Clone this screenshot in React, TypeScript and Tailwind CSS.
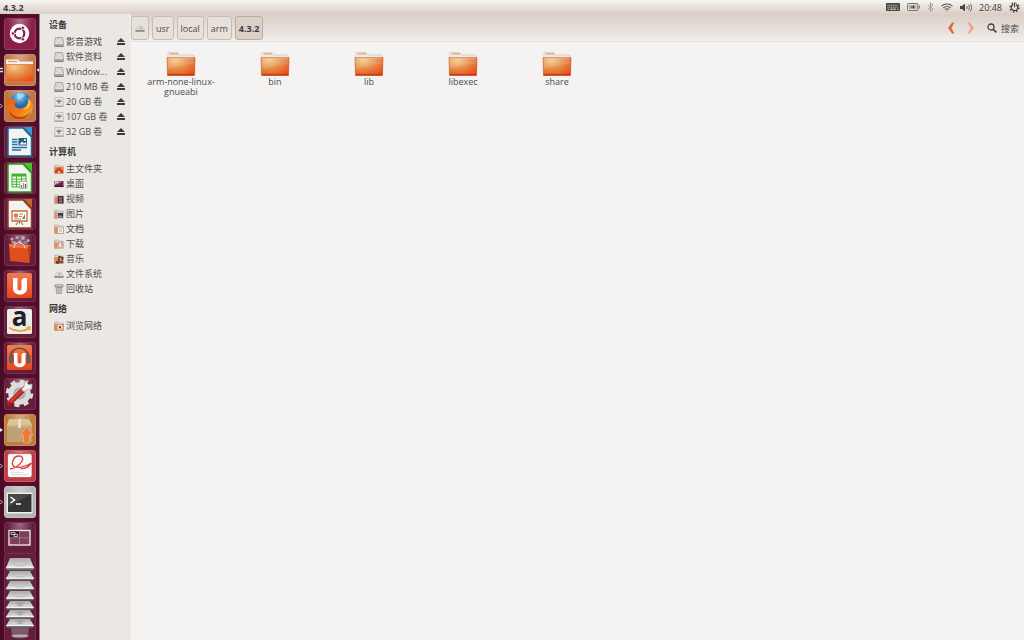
import { useState, type ReactNode } from 'react'
import clsx from 'clsx'

const devices = [
  { name: '影音游戏', kind: 'disk' },
  { name: '软件资料', kind: 'disk' },
  { name: 'Windows 7', label: 'Window...', kind: 'disk' },
  { name: '210 MB 卷', kind: 'disk' },
  { name: '20 GB 卷', kind: 'usb' },
  { name: '107 GB 卷', kind: 'usb' },
  { name: '32 GB 卷', kind: 'usb' },
]

const places = [
  { name: '主文件夹', kind: 'home' },
  { name: '桌面', kind: 'desktop' },
  { name: '视频', kind: 'video' },
  { name: '图片', kind: 'picture' },
  { name: '文档', kind: 'document' },
  { name: '下载', kind: 'download' },
  { name: '音乐', kind: 'music' },
  { name: '文件系统', kind: 'filesystem' },
  { name: '回收站', kind: 'trash' },
]

const folders = ['arm-none-linux-gnueabi', 'bin', 'lib', 'libexec', 'share']

const crumbs = ['usr', 'local', 'arm', '4.3.2']

export default function App() {
  const [current, setCurrent] = useState('4.3.2')

  return (
    <div className="flex h-screen flex-col overflow-hidden bg-[#f4f3f1] font-['Open_Sans','Noto_Sans_CJK_SC',sans-serif] text-[9px] leading-[11px] text-[#4c4c4c]">
      <Gradients />
      <MenuBar title={current} />
      <div className="flex min-h-0 flex-1">
        <Launcher />
        <Sidebar />
        <main className="flex min-w-0 flex-1 flex-col">
          <div className="flex items-center border-b border-[#e6ddd5] bg-linear-to-b from-[#d9cfc6] to-[#f1ede9] pt-0.5 pr-1 pb-px">
            <nav aria-label="路径" className="flex gap-[3px]">
              <button
                type="button"
                aria-label="/"
                className="flex h-6 w-[18px] items-center justify-center rounded-[3px] border border-[#c9bdb2] bg-[#e8e0da]"
              >
                <PlaceIcon kind="filesystem" />
              </button>
              {crumbs.map((crumb) => (
                <button
                  key={crumb}
                  type="button"
                  onClick={() => setCurrent(crumb)}
                  className={clsx(
                    'h-6 rounded-[3px] border px-[3px]',
                    crumb === current
                      ? 'border-[#b9ada1] bg-[#d9d0c8] font-bold text-[#3c3c3c]'
                      : 'border-[#c9bdb2] bg-[#e8e0da]'
                  )}
                >
                  {crumb}
                </button>
              ))}
            </nav>
            <div className="ml-auto flex items-center gap-3">
              <button type="button" aria-label="后退">
                <svg width="8" height="12" viewBox="0 0 8 12">
                  <path d="M5 .5 1 6l4 5.500h2.500L4.500 6l3-5.500Z" fill="#e0693a" />
                </svg>
              </button>
              <button type="button" aria-label="前进">
                <svg width="8" height="12" viewBox="0 0 8 12">
                  <path d="M3 .5 7 6l-4 5.500H.5L3.500 6l-3-5.500Z" fill="#eba88b" />
                </svg>
              </button>
              <button type="button" className="flex items-center gap-1 pr-px">
                <svg width="10" height="10" viewBox="0 0 10 10" fill="none" stroke="#444">
                  <circle cx="4" cy="4" r="3" strokeWidth="1.300" />
                  <path d="m6.300 6.300 3 3" strokeWidth="1.800" />
                </svg>
                搜索
              </button>
            </div>
          </div>
          <div className="flex flex-wrap content-start pt-[9px] pl-[3px]">
            {folders.map((name) => (
              <button key={name} type="button" className="flex w-[94px] flex-col items-center px-2 leading-[10px]">
                <FolderIcon />
                <span className="max-w-full">{name}</span>
              </button>
            ))}
          </div>
        </main>
      </div>
    </div>
  )
}

function MenuBar({ title }: { title: string }) {
  return (
    <header className="flex h-[14px] shrink-0 items-center justify-between bg-linear-to-b from-[#f8f5f1] to-[#d9cfc6] pr-1 pl-[3px]">
      <h1 className="font-bold text-[#3c3c3c]">{title}</h1>
      <div className="flex items-center gap-[7px] text-[#444]">
        <svg width="14" height="8" viewBox="0 0 14 8">
          <rect width="14" height="8" rx="1" fill="#444" />
          <path d="M1.500 2.200h11M1.500 4.200h11" stroke="#e6e0da" strokeWidth="1" strokeDasharray="1 .8" />
          <path d="M1.500 6.200h1.500M4 6.200h6M11 6.200h1.500" stroke="#e6e0da" strokeWidth="1" />
        </svg>
        <svg width="13" height="8" viewBox="0 0 13 8">
          <rect x=".5" y=".5" width="10.500" height="7" rx="1" fill="#dcd8d4" stroke="#777" />
          <rect x="2" y="2" width="7.500" height="4" fill="#b9b4ae" />
          <path d="M12.300 2.500v3" stroke="#777" />
          <path d="M3.500 4h4M6.500 2.500v3" stroke="#333" strokeWidth=".9" fill="none" />
        </svg>
        <svg width="7" height="10" viewBox="0 0 7 10" fill="none" stroke="#a39e99" strokeWidth="1">
          <path d="m1 3 5 4-2.500 2.300V.7L6 3 1 7" />
        </svg>
        <svg width="12" height="9" viewBox="0 0 12 9" fill="none" stroke="#555" strokeWidth="1.100">
          <path d="M.5 3.200c3-3 8-3 11 0" />
          <path d="M2.300 5c2-2 5.400-2 7.400 0" />
          <path d="M4 6.600c1-1 3-1 4 0" />
          <circle cx="6" cy="8" r=".6" fill="#555" stroke="none" />
        </svg>
        <svg width="12" height="9" viewBox="0 0 12 9" fill="none" stroke="#444">
          <path d="M0 3h2l3-2.500v8L2 6H0Z" fill="#444" stroke="none" />
          <path d="M6.500 3c.8 1 .8 2 0 3M8.300 1.800c1.500 1.700 1.500 3.700 0 5.400M10 .6c2.200 2.500 2.200 5.300 0 7.800" strokeWidth=".9" />
        </svg>
        <time className="text-[#3c3c3c]">20:48</time>
        <svg width="11" height="11" viewBox="0 0 11 11" fill="none" stroke="#444">
          <circle cx="5.500" cy="5.500" r="4.400" strokeWidth="1.500" strokeDasharray="1.500 1.955" />
          <circle cx="5.500" cy="5.500" r="3.200" strokeWidth="1.300" />
          <path d="M5.500 1v4.500" stroke="#ece7e2" strokeWidth="2.600" />
          <path d="M5.500.5v4.800" strokeWidth="1.200" />
        </svg>
      </div>
    </header>
  )
}

function Sidebar() {
  return (
    <aside className="flex w-[91px] shrink-0 flex-col gap-0.5 border-r border-[#efedea] bg-[#ebe8e3]">
      <Section title="设备">
        {devices.map((d) => (
          <li key={d.name} className="flex h-[15px] items-center justify-between pr-[5px]">
            <PlaceLink kind={d.kind}>{d.label ?? d.name}</PlaceLink>
            <button type="button" aria-label={`弹出 ${d.name}`}>
              <svg width="8" height="7" viewBox="0 0 8 7" fill="#3c3c3c">
                <path d="m4 0 4 4H0ZM0 5h8v2H0Z" />
              </svg>
            </button>
          </li>
        ))}
      </Section>
      <Section title="计算机">
        {places.map((p) => (
          <li key={p.name} className="flex h-[15px] items-center">
            <PlaceLink kind={p.kind}>{p.name}</PlaceLink>
          </li>
        ))}
      </Section>
      <Section title="网络">
        <li className="flex h-[15px] items-center">
          <PlaceLink kind="network">浏览网络</PlaceLink>
        </li>
      </Section>
    </aside>
  )
}

function Section({ title, children }: { title: string; children: ReactNode }) {
  return (
    <section>
      <h2 className="flex h-5 items-center pl-[9px] font-bold text-[#3c3c3c]">{title}</h2>
      <ul className="pl-[14px]">{children}</ul>
    </section>
  )
}

function PlaceLink({ kind, children }: { kind: string; children: ReactNode }) {
  return (
    <a href="#" className="flex items-center gap-0.5 whitespace-nowrap">
      <PlaceIcon kind={kind} />
      {children}
    </a>
  )
}

function PlaceIcon({ kind }: { kind: string }) {
  return <svg width="10" height="10" viewBox="0 0 10 10" className="shrink-0">{placeShapes[kind]}</svg>
}

const miniFolder = (
  <>
    <path d="M.5 1h4l1 1h4v7.500h-9Z" fill="#d9d2ca" stroke="#a9a098" strokeWidth=".5" />
    <path d="M.5 3h3v6.500h-3Z" fill="#e58a5a" />
  </>
)

const placeShapes: Record<string, ReactNode> = {
  disk: (
    <>
      <path d="M1.500.5h7l1 6v3h-9v-3Z" fill="#e2e2e0" stroke="#8b8b88" strokeWidth=".7" />
      <ellipse cx="5" cy="3.500" rx="2.500" ry="1.800" fill="none" stroke="#bcbcb9" strokeWidth=".7" />
      <path d="M.5 7h9v2.500h-9Z" fill="#a5a5a2" />
      <path d="M1 9.500h8" stroke="#6f6f6c" strokeWidth=".7" />
    </>
  ),
  usb: (
    <>
      <path d="M1 .5h8l.5 9h-9Z" fill="#e6e6e4" stroke="#a9a9a6" strokeWidth=".6" />
      <path d="M5 2v5M3 3v1.500h4V3" fill="none" stroke="#666" strokeWidth=".9" />
      <path d="M1 9h8" stroke="#8b8b88" strokeWidth=".9" />
    </>
  ),
  home: (
    <>
      {miniFolder}
      <path d="M.5 3h9v6.500h-9Z" fill="#e9895b" />
      <path d="m5 3 4 3.500V9H1V6.500Z" fill="#d8431c" />
      <path d="M4 7h2v2H4Z" fill="#f3c1a6" />
    </>
  ),
  desktop: (
    <>
      <path d="M.5 2h9v6h-9Z" fill="#6b2148" />
      <path d="M1 2.500h8L1 6Z" fill="#c98aa6" />
      <path d="M1 2.500h4L1 4.500Z" fill="#f1dce5" />
      <path d="M.5 7.500h9" stroke="#2f1524" />
    </>
  ),
  video: (
    <>
      {miniFolder}
      <path d="M3.500 2h6v7.500h-6Z" fill="#4a3340" />
      <path d="M5 3.500h3v2H5ZM5 6.500h3v2H5Z" fill="#9b6d86" />
    </>
  ),
  picture: (
    <>
      {miniFolder}
      <path d="M3.500 3.500h6v5.500h-6Z" fill="#3b3f4c" stroke="#f1f1f1" strokeWidth=".6" />
      <path d="m4 8 2-2 3 2Z" fill="#8d94a8" />
    </>
  ),
  document: (
    <>
      {miniFolder}
      <path d="M3.500 3h4l2 2v4.500h-6Z" fill="#f2efec" stroke="#a9857a" strokeWidth=".6" />
      <path d="M5 5.500h3M5 7.200h3" stroke="#c58a70" strokeWidth=".6" />
    </>
  ),
  download: (
    <>
      {miniFolder}
      <path d="M3 3h6.500v6H3Z" fill="#e7ae8e" />
      <path d="M5 3h2.500v3H9L6.200 9 3.500 6H5Z" fill="#f1eeec" stroke="#8a7a74" strokeWidth=".5" />
    </>
  ),
  music: (
    <>
      {miniFolder}
      <path d="M.5 3h9v6.500h-9Z" fill="#e58a5a" />
      <path d="M5 8V2.500l3.500 1V6M5 8a1.200 1 0 1 1-1-.8" fill="none" stroke="#2f2f2f" strokeWidth="1.200" />
      <circle cx="7.500" cy="8" r="1.300" fill="#444" />
    </>
  ),
  filesystem: (
    <>
      <path d="M3 3h4.500L9.500 7H.5Z" fill="#dededc" stroke="#b5b5b2" strokeWidth=".4" />
      <path d="M4 5h3M5.500 4v2" stroke="#999" strokeWidth=".6" />
      <path d="M.5 7h9v1.800h-9Z" fill="#8b8b89" />
    </>
  ),
  trash: (
    <>
      <path d="M1.500 2.500h7L7.800 10H2.200Z" fill="#a6a6a3" />
      <path d="M3.500 4v5M5 4v5M6.500 4v5" stroke="#d9d9d6" strokeWidth=".6" />
      <path d="M1 .8h8v2H1Z" fill="#dcdcda" stroke="#777" strokeWidth=".7" />
    </>
  ),
  network: (
    <>
      {miniFolder}
      <path d="M.5 3h9v6.500h-9Z" fill="#e08457" />
      <circle cx="5.800" cy="6.200" r="2.600" fill="#f1e5dd" />
      <path d="M4.800 5.200h2.200v2.200H4.800Z" fill="#54433c" />
    </>
  ),
}

function FolderIcon() {
  return (
    <svg width="30" height="26" viewBox="0 0 30 26">
      <path d="M2 1.500h10l1.500 2.500h14.500v18H2Z" fill="#eeecea" stroke="#c8c4c0" strokeWidth=".7" />
      <path d="M4 3h8" stroke="#ee9a68" strokeWidth="1.200" />
      <path d="M1 6.500h28L28.500 24.500h-27Z" fill="url(#folder)" stroke="#bd5127" strokeWidth=".6" />
      <path d="M1.500 7h27" stroke="#f0c09a" strokeWidth=".7" />
      <path d="M1.700 23.800h26.600" stroke="#b5340e" strokeWidth="1" />
      <path d="M1.500 7h27v6C17 13 8 16 1.600 19Z" fill="#fff" opacity=".1" />
    </svg>
  )
}

function Gradients() {
  return (
    <svg width="0" height="0" className="absolute" aria-hidden="true">
      <defs>
        <radialGradient id="folder" cx=".3" cy=".15" r="1">
          <stop offset="0" stopColor="#f4cb8c" />
          <stop offset=".45" stopColor="#e68f4b" />
          <stop offset="1" stopColor="#e9450f" />
        </radialGradient>
        <linearGradient id="plate" x1="0" y1="0" x2="0" y2="1">
          <stop offset="0" stopColor="#a9a9a7" />
          <stop offset="1" stopColor="#e3e3e1" />
        </linearGradient>
        <linearGradient id="orange" x1="0" y1="0" x2="0" y2="1">
          <stop offset="0" stopColor="#f47b4c" />
          <stop offset="1" stopColor="#e4471c" />
        </linearGradient>
        <radialGradient id="globe" cx=".45" cy=".2" r=".8">
          <stop offset="0" stopColor="#8fd4f3" />
          <stop offset=".5" stopColor="#2a78bd" />
          <stop offset="1" stopColor="#15336f" />
        </radialGradient>
        <linearGradient id="fox" x1="0" y1="0" x2="1" y2="1">
          <stop offset="0" stopColor="#e25c18" />
          <stop offset=".6" stopColor="#ee7c1b" />
          <stop offset="1" stopColor="#f9c43a" />
        </linearGradient>
      </defs>
    </svg>
  )
}

type LauncherApp = {
  name: string
  tile: string
  art: ReactNode
  running?: 'windows' | 'filled' | 'hollow'
  focused?: boolean
}

const dark = 'bg-[#651d3e] border-[#74324e]'

const office = (color: string, dim: string, body: ReactNode) => (
  <>
    <path d="M19 1h9v9Z" fill={dim} />
    <path d="M5.500 2h14l8 8.500v19.500h-22a1.500 1.500 0 0 1-1.500-1.500v-25A1.500 1.500 0 0 1 5.500 2Z" fill="#f3f3f2" stroke={color} strokeWidth="1.500" />
    <path d="m19.500 2 8 8.500" stroke={color} strokeWidth="2" />
    {body}
  </>
)

const launcherApps: LauncherApp[] = [
  {
    name: 'Dash',
    tile: 'bg-[#88204a] border-[#943a5e]',
    art: (
      <>
        <circle cx="15.500" cy="15.500" r="9.700" fill="#fff" />
        <circle cx="15.500" cy="15.500" r="4.800" fill="none" stroke="#88204a" strokeWidth="2.300" />
        <path d="M15.500 15.500H8M15.500 15.500l4.500-7.600M15.500 15.500l4.500 7.600" stroke="#fff" strokeWidth="1" />
        <circle cx="15.500" cy="15.500" r="3.300" fill="#fff" />
        <g fill="#88204a" stroke="#fff" strokeWidth=".7">
          <circle cx="8.900" cy="15.500" r="1.700" />
          <circle cx="18.800" cy="9.800" r="1.700" />
          <circle cx="18.800" cy="21.200" r="1.700" />
        </g>
      </>
    ),
  },
  {
    name: '文件',
    tile: 'bg-[#bf7a4c] border-[#cc8e66]',
    running: 'windows',
    focused: true,
    art: (
      <>
        <path d="M2 5.500h12l1.500 2h13.500v20H2Z" fill="#f4f1ee" />
        <path d="M4 7.500h9" stroke="#ef9a62" strokeWidth="1.200" />
        <path d="M2 10.500h27.500L29 27.500H2.500Z" fill="url(#folder)" stroke="#d8632d" strokeWidth=".6" />
      </>
    ),
  },
  {
    name: 'Firefox',
    tile: 'bg-[#b97748] border-[#c78a62]',
    running: 'hollow',
    art: (
      <>
        <circle cx="16.500" cy="12.500" r="10.500" fill="url(#globe)" />
        <path d="M13 4c2-2 6-1 8 1-1 2-3 2-4 4s-3 0-4-1Z" fill="#b9e4f5" opacity=".6" />
        <path d="M4 5c0 2 0 3 .6 4 2-.6 4-.4 5.400.6l3.500 1.400c-1 1-3 1.200-3 3 0 4 5 5.500 9 3.500 3.500-1.500 5.500-5 4.500-10 2 1 3 3 3 4 .6-1 .4-2 .3-3 3 7 1.500 14-3 18-5 4.500-13 4.500-18 0C.5 21 .8 12 4 5Z" fill="url(#fox)" />
        <path d="M5 20c3 7 15 10 21 2-2 8-14 11-20 2.500Z" fill="#cf3f12" />
        <path d="M24 8c1.500 5-.5 10-5 12 5-.5 9-5 7-9Z" fill="#fbd548" />
      </>
    ),
  },
  {
    name: 'LibreOffice Writer',
    tile: dark,
    art: office('#1c6a96', '#3a9ccd', (
      <>
        <path d="M8 13.500h5.500M8 16h5.500M8 18.500h5.500M8 21.500h15M8 24h9" stroke="#2475a2" strokeWidth="1.300" />
        <path d="M14.500 12h8.500v7.500h-8.500Z" fill="#245e86" />
        <path d="m15.500 18.500 2.500-3 2 2 1.500-1.500 1 2.500Z" fill="#fff" />
        <circle cx="21" cy="14" r="1" fill="#fff" />
      </>
    )),
  },
  {
    name: 'LibreOffice Calc',
    tile: dark,
    art: office('#2ca017', '#52ba3c', (
      <>
        <path d="M8 12h14v13H8Z" fill="#e7f7e2" stroke="#46b02f" />
        <path d="M8 12h14v2.500H8Z" fill="#46b02f" />
        <path d="M8 17.200h14M8 19.800h14M8 22.400h14M12.500 12v13M17.500 12v13" stroke="#46b02f" strokeWidth=".9" />
        <path d="M16 19.500h7v7h-7Z" fill="#fff" stroke="#888" strokeWidth=".5" />
        <path d="M17.500 26v-3" stroke="#3b8fd0" strokeWidth="1.300" />
        <path d="M19.500 26v-5" stroke="#e8792c" strokeWidth="1.300" />
        <path d="M21.500 26v-4" stroke="#2c70ad" strokeWidth="1.300" />
      </>
    )),
  },
  {
    name: 'LibreOffice Impress',
    tile: dark,
    art: office('#8e401e', '#c26436', (
      <>
        <path d="M8 13h15v10H8Z" fill="#fff" stroke="#cd6a39" strokeWidth="1.300" />
        <circle cx="12" cy="17.500" r="2.300" fill="#c98056" />
        <path d="M15 16h4M15 18.500h3M10 21h7" stroke="#c98056" />
        <path d="m18 21 3-5v5Z" fill="#41a046" />
        <path d="M15.500 23v2.500M12 27l2-3M19 27l-2-3" stroke="#9b5a3c" />
      </>
    )),
  },
  {
    name: 'Ubuntu 软件中心',
    tile: dark,
    art: (
      <>
        <path d="M7 7h17v7H7Z" fill="#8d5367" />
        <g fill="#b9aab2">
          <circle cx="8" cy="5" r="1.600" />
          <circle cx="13" cy="3.500" r="1.600" />
          <circle cx="19" cy="4" r="2" />
          <circle cx="24" cy="6.500" r="1.600" />
          <circle cx="16" cy="8" r="1.800" />
          <circle cx="11" cy="9" r="1.600" />
        </g>
        <circle cx="9" cy="8" r="1.300" fill="#e78963" />
        <circle cx="21" cy="8.500" r="1.500" fill="#7e95aa" />
        <path d="m5 10 22 1-1.500 18L6 27Z" fill="#dd4f1c" />
        <path d="m5 10 22 1-.4 4L5.300 13Z" fill="#ed7443" />
        <path d="M10 14c0-7 10-7 11 0" fill="none" stroke="#f1e1d8" strokeWidth="1" />
        <path d="m25.500 29 1.500-18-3 2Z" fill="#b93b10" />
      </>
    ),
  },
  {
    name: 'Ubuntu One',
    tile: dark,
    art: (
      <>
        <rect x="3" y="3" width="25" height="25" rx="1.500" fill="url(#orange)" />
        <path d="M9 8h4.500v10.500c0 2.500 4 2.500 4 0V10l2-2H23v10.500c0 8-14 8-14 0Z" fill="#fff" />
      </>
    ),
  },
  {
    name: 'Amazon',
    tile: dark,
    art: (
      <>
        <rect x="3" y="3" width="25" height="25" rx="1.500" fill="#ececeb" />
        <text x="15.500" y="20" textAnchor="middle" fontSize="26" fontWeight="700" fontFamily="Open Sans" fill="#222">
          a
        </text>
        <path d="M5 21.500c6 4.500 14 4.500 20 1" fill="none" stroke="#ee9a1d" strokeWidth="1.500" />
        <path d="M22.500 21.500c2-.8 3.500-.6 3.800-.2.300.6-.2 2.200-1.300 3.400" fill="none" stroke="#ee9a1d" strokeWidth="1.200" />
      </>
    ),
  },
  {
    name: 'Ubuntu One Music',
    tile: dark,
    art: (
      <>
        <rect x="3" y="3" width="25" height="25" rx="1.500" fill="url(#orange)" />
        <path d="M6.500 16C6 3 25 3 24.500 16" fill="none" stroke="#6b4a42" strokeWidth="1.700" />
        <path d="M10 11h3.500v9c0 2 4 2 4 0v-7.500l1.500-1.500h2.500v9c0 7-11.500 7-11.500 0Z" fill="#fff" />
        <rect x="5" y="12.500" width="4.500" height="9" rx="2" fill="#6d5a55" />
        <rect x="22" y="12.500" width="4.500" height="9" rx="2" fill="#6d5a55" />
      </>
    ),
  },
  {
    name: '系统设置',
    tile: dark,
    art: (
      <>
        <circle cx="15.500" cy="15.500" r="8.500" fill="none" stroke="#dcdcda" strokeWidth="5.500" />
        <circle cx="15.500" cy="15.500" r="12" fill="none" stroke="#dcdcda" strokeWidth="3.500" strokeDasharray="5 4.420" />
        <circle cx="15.500" cy="15.500" r="6" fill="#b2adae" />
        <path d="M20 11 4.500 26" stroke="#8f1c18" strokeWidth="5" strokeLinecap="round" />
        <path d="M18 12.500 5 25" stroke="#d93b30" strokeWidth="3" strokeLinecap="round" />
        <path d="m17.500 11 3-3c-1-3 1-5.500 4-5.500L23 5l2 2 3-1c1 3-2 6-5 5.500l-3 2.500Z" fill="#f2f2f2" stroke="#9b9b99" strokeWidth=".6" />
        <circle cx="5.500" cy="25" r="1" fill="#6b1412" />
      </>
    ),
  },
  {
    name: '软件更新器',
    tile: 'bg-[#bd7d3c] border-[#cb9154]',
    running: 'filled',
    art: (
      <>
        <path d="M5 5h20l3 6H3Z" fill="#d9c49a" />
        <path d="M3 11h25v17H3Z" fill="#bca274" />
        <path d="M3 11h25v2H3Z" fill="#c9b184" />
        <path d="M14 5h3v9h-3Z" fill="#eadfc4" />
        <path d="m23 13 6 8h-3.500v8h-6v-8H16.500Z" fill="#ee7a33" stroke="#f6b27e" strokeWidth=".7" />
      </>
    ),
  },
  {
    name: '文档查看器',
    tile: 'bg-[#c13d45] border-[#cb5a60]',
    running: 'hollow',
    art: (
      <>
        <rect x="3.500" y="3.500" width="24.500" height="24" rx="2.500" fill="#fafafa" stroke="#a92e36" strokeWidth=".6" />
        <path d="M6 19C17 17 23 6 15 6c-6 0-9 9-4 11 5 1.500 11-1 16.500-4-3 4-7 6-11 5.500" fill="none" stroke="#df3b3e" strokeWidth="1.300" />
        <path d="M7 22.500h12M7 24.500h17" stroke="#dedede" />
      </>
    ),
  },
  {
    name: '终端',
    tile: 'bg-[#b4b4b2] border-[#c4c4c2]',
    running: 'hollow',
    art: (
      <>
        <path d="M2.500 6.500h26v21h-26Z" fill="#efefed" />
        <path d="M4 8h23.500v18H4Z" fill="#333533" />
        <path d="M4 8h23.500L4 21Z" fill="#474947" />
        <path d="m6.500 11 4 3-4 3M12 18h5" fill="none" stroke="#fff" strokeWidth="1.500" />
      </>
    ),
  },
  {
    name: '工作区切换器',
    tile: dark,
    art: (
      <>
        <rect x="5" y="8.500" width="21" height="14.500" fill="#7b405b" stroke="#f3edf0" strokeWidth="1.300" />
        <path d="M5.700 9.200h9.800v6.500H5.700Z" fill="#3b1828" />
        <path d="M15.500 9v14M5.500 15.800h20" stroke="#b08b9b" strokeWidth=".7" />
        <path d="M7 10.500h4v2H7ZM10 12.500h3.500v2H10Z" fill="none" stroke="#ddd" strokeWidth=".8" />
      </>
    ),
  },
]

function Launcher() {
  return (
    <nav
      aria-label="启动器"
      className="flex w-10 shrink-0 flex-col items-center gap-1 overflow-hidden border-r border-[#9b8790] bg-linear-to-r from-[#4a0a25] via-[#5c102f] to-[#4f0c29] pt-1"
    >
      {launcherApps.map((app) => (
        <button
          key={app.name}
          type="button"
          aria-label={app.name}
          className={clsx('relative size-8 shrink-0 rounded-[3px] border', app.tile)}
        >
          <span className="absolute inset-0 rounded-[2px] bg-radial-[at_50%_0%] from-white/35 to-transparent to-60%" />
          <svg viewBox="0 0 32 32" className="absolute -inset-px size-8 overflow-visible">
            {app.art}
          </svg>
          {app.running && (
            <svg width="4" height="6" viewBox="0 0 4 6" className="absolute top-3 -left-[5px]">
              {app.running === 'windows' && <path d="M0 1.500h3M0 4.500h3" stroke="#ddd" strokeWidth="1.300" />}
              {app.running === 'filled' && <path d="m0 1 3 2-3 2Z" fill="#eee" />}
              {app.running === 'hollow' && <path d="m0 1 2.500 2L0 5" fill="none" stroke="#b9a3ac" />}
            </svg>
          )}
          {app.focused && (
            <svg width="4" height="6" viewBox="0 0 4 6" className="absolute top-3 -right-[5px]">
              <path d="M4 .5.500 3 4 5.500Z" fill="#eee" />
            </svg>
          )}
        </button>
      ))}
      <div className="-mt-1 flex w-8 flex-col">
        {devices.map((d, i) => (
          <button
            key={d.name}
            type="button"
            aria-label={`挂载 ${d.name}`}
            className={clsx(
              'border-x border-[#74324e] bg-[#651d3e]',
              i === 0 ? 'h-[17px] rounded-t-[3px] pt-1' : d.kind === 'disk' ? 'h-[10px]' : 'h-[9px]'
            )}
          >
            <svg
              width="30"
              height="13"
              viewBox="0 0 30 13"
              preserveAspectRatio="none"
              className={clsx('block', i > 0 && (d.kind === 'disk' ? 'h-[10px]' : 'h-[9px]'))}
            >
              <path d="M5 0h20l4 10H1Z" fill="url(#plate)" />
              <path d="M1 10h28l-1 2.500H2Z" fill="#6b6b6a" />
              <path d="M1 9.500h28" stroke="#f3f3f2" strokeWidth="1.500" />
              {d.kind === 'usb' ? (
                <path d="M15 1v7M10 3h10M12 6h6" stroke="#8a8a88" strokeWidth=".8" />
              ) : (
                <ellipse cx="15" cy="5" rx="6" ry="2.800" fill="none" stroke="#b3b3b1" strokeWidth=".8" />
              )}
            </svg>
          </button>
        ))}
        <button type="button" aria-label="回收站" className="flex h-3 justify-center border-x border-[#74324e] bg-[#651d3e]">
          <svg width="20" height="12" viewBox="0 0 20 12">
            <path d="M1 0h18l-1 9H2Z" fill="#7b5968" />
            <ellipse cx="10" cy="8" rx="8.500" ry="1.600" fill="#b9b3b4" />
            <path d="M2 8.500c3 2 13 2 16 0" fill="none" stroke="#6c6064" />
          </svg>
        </button>
      </div>
    </nav>
  )
}
